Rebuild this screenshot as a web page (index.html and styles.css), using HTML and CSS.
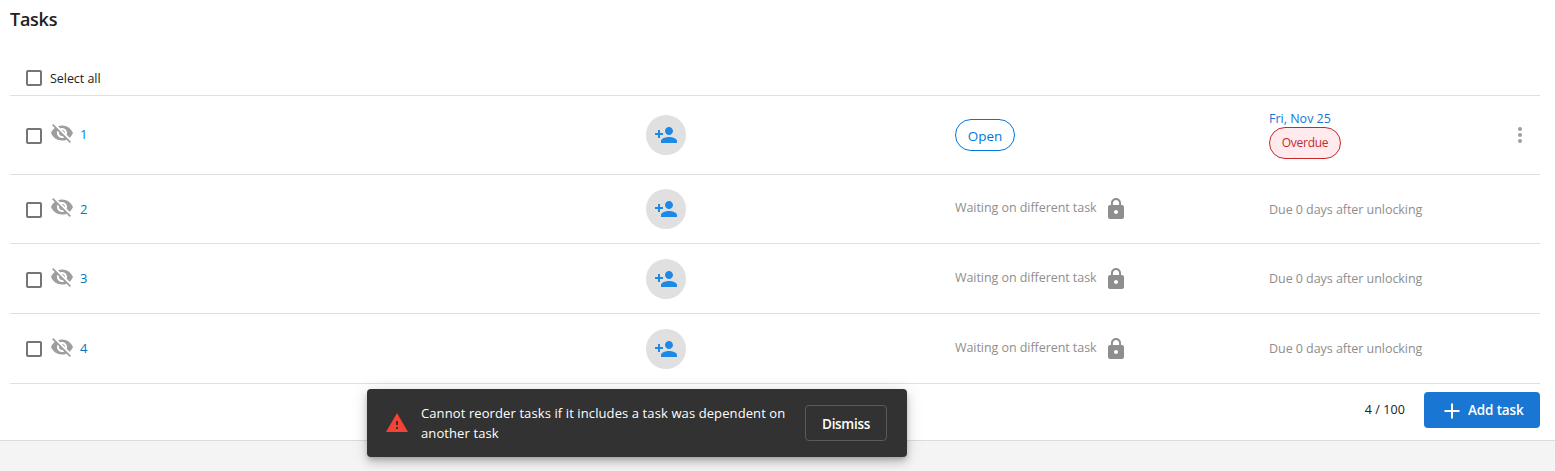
FILE: index.html
```html
<!DOCTYPE html>
<html lang="en">
<head>
<meta charset="utf-8">
<title>Tasks</title>
<link rel="stylesheet" href="styles.css">
</head>
<body>
<svg class="defs" width="0" height="0">
  <symbol id="hidden" viewBox="0 0 24 24"><path d="M12 7c2.76 0 5 2.24 5 5 0 .65-.13 1.26-.36 1.83l2.92 2.92c1.51-1.26 2.7-2.89 3.43-4.75-1.73-4.39-6-7.5-11-7.5-1.4 0-2.74.25-3.98.7l2.16 2.16C10.74 7.13 11.35 7 12 7zM2 4.27l2.28 2.28.46.46C3.08 8.3 1.78 10.02 1 12c1.73 4.39 6 7.5 11 7.5 1.55 0 3.03-.3 4.38-.84l.42.42L19.73 22 21 20.73 3.27 3 2 4.27zM7.53 9.8l1.55 1.55c-.05.21-.08.43-.08.65 0 1.66 1.34 3 3 3 .22 0 .44-.03.65-.08l1.55 1.55c-.67.33-1.41.53-2.2.53-2.76 0-5-2.24-5-5 0-.79.2-1.53.53-2.2zm4.31-.78l3.15 3.15.02-.16c0-1.66-1.34-3-3-3l-.17.01z"/></symbol>
  <symbol id="add-person" viewBox="0 0 24 24"><path d="M15 12c2.21 0 4-1.79 4-4s-1.79-4-4-4-4 1.79-4 4 1.79 4 4 4zm-9-2V7H4v3H1v2h3v3h2v-3h3v-2H6zm9 4c-2.67 0-8 1.34-8 4v2h16v-2c0-2.66-5.33-4-8-4z"/></symbol>
  <symbol id="lock" viewBox="0 0 24 24"><path d="M18 8h-1V6c0-2.76-2.24-5-5-5S7 3.24 7 6v2H6c-1.1 0-2 .9-2 2v10c0 1.1.9 2 2 2h12c1.100 0 2-.9 2-2V10c0-1.100-.9-2-2-2zm-6 9c-1.100 0-2-.9-2-2s.9-2 2-2 2 .9 2 2-.9 2-2 2zm3.100-9H8.900V6c0-1.710 1.390-3.100 3.100-3.100 1.710 0 3.100 1.390 3.100 3.100v2z"/></symbol>
</svg>
<main class="panel">
  <h1 class="title">Tasks</h1>
  <label class="select-all"><span class="checkbox"></span><span class="select-label">Select all</span></label>
  <div class="row row-open">
    <div class="name"><span class="checkbox"></span><svg class="eye"><use href="#hidden"/></svg><a class="link light">1</a></div>
    <div class="avatar"><svg><use href="#add-person"/></svg></div>
    <div class="status"><span class="chip open">Open</span></div>
    <div class="due"><a class="date">Fri, Nov 25</a><span class="chip overdue">Overdue</span></div>
    <div class="menu"><i></i><i></i><i></i></div>
  </div>
  <div class="row row-short">
    <div class="name"><span class="checkbox"></span><svg class="eye"><use href="#hidden"/></svg><a class="link">2</a></div>
    <div class="avatar"><svg><use href="#add-person"/></svg></div>
    <div class="status"><span class="waiting">Waiting on different task</span><svg class="lock"><use href="#lock"/></svg></div>
    <div class="due"><span class="after">Due 0 days after unlocking</span></div>
  </div>
  <div class="row">
    <div class="name"><span class="checkbox"></span><svg class="eye"><use href="#hidden"/></svg><a class="link raised">3</a></div>
    <div class="avatar"><svg><use href="#add-person"/></svg></div>
    <div class="status"><span class="waiting">Waiting on different task</span><svg class="lock"><use href="#lock"/></svg></div>
    <div class="due"><span class="after">Due 0 days after unlocking</span></div>
  </div>
  <div class="row row-last">
    <div class="name"><span class="checkbox"></span><svg class="eye"><use href="#hidden"/></svg><a class="link raised">4</a></div>
    <div class="avatar"><svg><use href="#add-person"/></svg></div>
    <div class="status"><span class="waiting">Waiting on different task</span><svg class="lock"><use href="#lock"/></svg></div>
    <div class="due"><span class="after">Due 0 days after unlocking</span></div>
  </div>
  <footer class="footer">
    <span class="count">4 / 100</span>
    <button class="add"><svg viewBox="0 0 16 16"><path d="M7 .5h2V7h6.500v2H9v6.500H7V9H.5V7H7z"/></svg><span>Add task</span></button>
  </footer>
</main>
<div class="snackbar">
  <svg class="warning" viewBox="0 0 24 24"><path d="M1 21h22L12 2 1 21zm12-3h-2v-2h2v2zm0-4h-2v-4h2v4z"/></svg>
  <p class="message">Cannot reorder tasks if it includes a task was dependent on<br>another task</p>
  <button class="dismiss">Dismiss</button>
</div>
</body>
</html>
```
FILE: styles.css
```css
* { box-sizing: border-box; }
body {
  margin: 0;
  height: 471px;
  overflow: hidden;
  background: #f4f4f4;
  color: #212121;
  font: 13px/20px "Segoe UI", "Open Sans", "Noto Sans", sans-serif;
}
.defs { position: absolute; }
.panel {
  height: 441px;
  padding: 0 15px 0 10px;
  background: #fff;
  border-bottom: 1px solid #dcdcdc;
}
.title {
  margin: 0;
  height: 60px;
  padding-top: 7px;
  font-size: 18px;
  line-height: 24px;
  font-weight: 600;
  letter-spacing: -0.25px;
}
.select-all {
  display: flex;
  align-items: center;
  height: 36px;
  padding-left: 16px;
  gap: 8px;
  border-bottom: 1px solid #e0e0e0;
}
.checkbox {
  flex: none;
  width: 16px;
  height: 16px;
  border: 2px solid #757575;
  border-radius: 2px;
}
.select-label { padding-top: 2px; font-size: 12.5px; letter-spacing: -0.05px; }
.row {
  display: grid;
  grid-template-columns: 636px 309px 314px 1fr 40px;
  align-items: center;
  height: 70px;
  border-bottom: 1px solid #e0e0e0;
}
.row-open { height: 79px; }
.row-short { height: 69px; }
.name { display: flex; align-items: center; padding-left: 16px; }
.name .checkbox { margin-top: 2px; }
.row-last .name .checkbox { margin-top: 1px; }
.eye {
  width: 24px;
  height: 24px;
  margin: -3px 6px 0 8px;
  fill: #9e9e9e;
}
.row-open .eye, .row-short .eye { margin-top: -5px; }
.link { font-size: 13px; color: #0277bd; }
.light { margin-top: -2px; color: #0288d1; }
.raised { margin-top: -1px; }
.avatar {
  display: flex;
  align-items: center;
  justify-content: center;
  width: 40px;
  height: 40px;
  border-radius: 50%;
  background: #e0e0e0;
}
.avatar svg { width: 24px; height: 24px; fill: #1e88e5; }
.status { display: flex; align-items: center; }
.waiting {
  width: 149px;
  margin-top: -2px;
  white-space: nowrap;
  font-size: 12.5px;
  letter-spacing: -0.06px;
  color: #8e8e8e;
}
.lock { width: 24px; height: 24px; fill: #8e8e8e; }
.due { display: flex; flex-direction: column; align-items: flex-start; }
.row-open .due { margin-top: -2px; }
.row-short .due { padding-top: 1px; }
.after { font-size: 12.5px; letter-spacing: -0.05px; color: #8e8e8e; white-space: nowrap; }
.chip {
  display: flex;
  align-items: center;
  justify-content: center;
  height: 32px;
  border: 1px solid;
  border-radius: 16px;
}
.open { width: 60px; padding-top: 2px; color: #0277d9; font-size: 13.5px; letter-spacing: 0; }
.date { height: 17px; line-height: 17px; color: #1976d2; font-size: 12.5px; letter-spacing: 0; }
.overdue { width: 72px; color: #c62828; background: #ffebee; font-size: 12px; letter-spacing: -0.25px; }
.menu { display: flex; flex-direction: column; align-items: center; gap: 2px; }
.menu i { width: 4px; height: 4px; border-radius: 50%; background: #9e9e9e; }
.footer { display: flex; justify-content: flex-end; align-items: center; gap: 19px; padding-top: 8px; }
.count { font-size: 12.5px; letter-spacing: 0.1px; }
.add {
  display: flex;
  align-items: center;
  width: 116px;
  height: 36px;
  padding: 0 0 0 20px;
  border: 0;
  border-radius: 4px;
  background: #1976d2;
  color: #fff;
  font: 600 13.5px/20px "Segoe UI", "Open Sans", sans-serif;
  letter-spacing: -0.15px;
  white-space: nowrap;
}
.add svg { width: 16px; height: 16px; margin: 2px 8px 0 0; fill: #fff; }
.snackbar {
  position: absolute;
  left: 367px;
  top: 389px;
  display: flex;
  align-items: center;
  width: 540px;
  height: 68px;
  padding: 0 20px 0 18px;
  border-radius: 4px;
  background: #323232;
  color: #fff;
  box-shadow: 0 3px 5px -1px rgba(0,0,0,.2), 0 6px 10px rgba(0,0,0,.14), 0 1px 18px rgba(0,0,0,.12);
}
.warning { flex: none; width: 24px; height: 24px; fill: #f44336; }
.message {
  flex: 1;
  margin: 0 0 0 12px;
  font-size: 13px;
  font-weight: 500;
  letter-spacing: 0.1px;
  white-space: nowrap;
}
.dismiss {
  width: 82px;
  height: 36px;
  padding: 2px 0 0;
  border: 1px solid #5b5b5b;
  border-radius: 4px;
  background: transparent;
  color: #fff;
  font: 600 13.5px/20px "Segoe UI", "Open Sans", sans-serif;
  letter-spacing: -0.3px;
}
```
